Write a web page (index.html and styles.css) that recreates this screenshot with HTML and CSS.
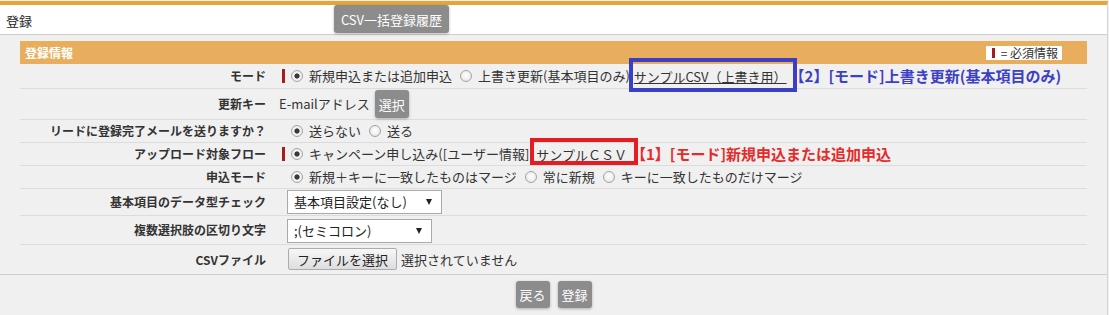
FILE: index.html
```html
<!DOCTYPE html>
<html lang="ja">
<head>
<meta charset="utf-8">
<title>登録</title>
<link rel="stylesheet" href="styles.css">
</head>
<body>
<div class="page">
  <header class="topbar">
    <h1 class="page-title">登録</h1>
    <button class="btn btn-history" type="button">CSV一括登録履歴</button>
  </header>

  <main class="content">
    <section class="panel">
      <div class="panel-head">
        <span class="panel-title">登録情報</span>
        <span class="legend"><span class="legend-bar"></span>= 必須情報</span>
      </div>

      <div class="row row-mode">
        <div class="label">モード</div>
        <div class="value"><span class="req"></span><span class="radio on"></span>新規申込または追加申込<span class="radio next"></span>上書き更新(基本項目のみ)<span class="mark mark-blue"><a class="link">サンプルCSV（上書き用）</a><span class="box box-blue"></span></span><span class="note note-blue">【2】[モード]上書き更新(基本項目のみ)</span></div>
      </div>

      <div class="row">
        <div class="label">更新キー</div>
        <div class="value"><span class="key-text">E-mailアドレス</span><button class="btn btn-select" type="button">選択</button></div>
      </div>

      <div class="row">
        <div class="label">リードに登録完了メールを送りますか？</div>
        <div class="value"><span class="radio on"></span>送らない<span class="radio next"></span>送る</div>
      </div>

      <div class="row">
        <div class="label">アップロード対象フロー</div>
        <div class="value"><span class="req"></span><span class="radio on"></span>キャンペーン申し込み([ユーザー情報]<span class="mark mark-red"><a class="link">サンプルＣＳＶ</a><span class="box box-red"></span></span><span class="note note-red">【1】[モード]新規申込または追加申込</span></div>
      </div>

      <div class="row">
        <div class="label">申込モード</div>
        <div class="value"><span class="radio on"></span>新規＋キーに一致したものはマージ<span class="radio next"></span>常に新規<span class="radio next"></span>キーに一致したものだけマージ</div>
      </div>

      <div class="row">
        <div class="label">基本項目のデータ型チェック</div>
        <div class="value"><span class="select select-type">基本項目設定(なし)</span></div>
      </div>

      <div class="row">
        <div class="label">複数選択肢の区切り文字</div>
        <div class="value"><span class="select select-sep">;(セミコロン)</span></div>
      </div>

      <div class="row row-last">
        <div class="label">CSVファイル</div>
        <div class="value"><button class="file-btn" type="button">ファイルを選択</button><span class="file-none">選択されていません</span></div>
      </div>
    </section>
  </main>

  <footer class="actions">
    <button class="btn btn-small" type="button">戻る</button>
    <button class="btn btn-small" type="button">登録</button>
  </footer>
</div>
</body>
</html>
```

FILE: styles.css
```css
* {
  box-sizing: border-box;
  margin: 0;
  padding: 0;
}

body {
  background: #f0f0f0;
  font-family: "Noto Sans CJK JP", "Noto Sans", sans-serif;
  font-size: 13px;
  color: #333;
  padding-top: 1px;
  width: 1109px;
  height: 315px;
  overflow: hidden;
}

.page {
  width: 1108px;
  border-top: 4px solid #e6a43b;
  border-right: 1px solid #d6d6d6;
  min-height: 314px;
}

/* ---------- top bar ---------- */
.topbar {
  display: flex;
  align-items: flex-start;
  height: 30px;
  background: #fff;
  border-bottom: 1px solid #cdcdcd;
}

.page-title {
  width: 334px;
  padding: 2px 0 0 6px;
  font-size: 13px;
  font-weight: normal;
  line-height: 27px;
  color: #222;
}

.btn {
  border: 0;
  border-radius: 3px;
  background: #8c8c8c;
  color: #fff;
  font-family: inherit;
  font-size: 13px;
  line-height: 1;
  box-shadow: 0 1px 3px rgba(0, 0, 0, 0.28);
  text-align: center;
}

.btn-history {
  width: 115px;
  height: 28px;
}

/* ---------- content ---------- */
.content {
  padding: 6px 20px 0;
}

.panel-head {
  display: flex;
  align-items: center;
  justify-content: space-between;
  height: 23px;
  padding: 0 25px 0 5px;
  background: #e8ae5d;
}

.panel-title {
  color: #fff;
  font-size: 12px;
  font-weight: bold;
  line-height: 23px;
}

.legend {
  display: flex;
  align-items: center;
  height: 14px;
  padding: 0 4px 0 6px;
  background: #fff;
  font-size: 12px;
  line-height: 14px;
  color: #333;
}

.legend-bar {
  width: 3px;
  height: 10px;
  margin-right: 6px;
  background: #9e1f1f;
}

.row {
  display: grid;
  grid-template-columns: 260px 1fr;
  align-items: center;
  min-height: 23px;
  border-bottom: 1px solid #dcdcdc;
}

.row-mode {
  min-height: 25px;
}

.row-last {
  border-bottom: 0;
}

.label {
  padding-right: 14px;
  text-align: right;
  font-size: 12px;
  font-weight: bold;
  line-height: 18px;
  color: #333;
  white-space: nowrap;
}

.value {
  display: flex;
  align-items: center;
  padding-left: 8px;
  line-height: 18px;
  white-space: nowrap;
}

.req {
  display: inline-block;
  width: 3px;
  height: 14px;
  margin-left: -6px;
  margin-right: 3px;
  background: #a31f1f;
}

.radio {
  display: inline-block;
  flex: none;
  width: 12px;
  height: 12px;
  margin: 0 6px 0 3px;
  border: 1px solid #a5a5a5;
  border-radius: 50%;
  background: radial-gradient(circle at 50% 45%, #ffffff 0, #f3f3f3 45%, #d9d9d9 100%);
}

.radio.next {
  margin-left: 8px;
}

.radio.on {
  background: radial-gradient(circle at 50% 50%, #3a3a3a 0, #3a3a3a 2.2px, #f6f6f6 3px, #e2e2e2 100%);
}

.mark {
  position: relative;
  display: inline-block;
  line-height: 17px;
}

.mark-blue {
  margin-left: 4px;
}

.mark-red {
  margin-left: 7px;
}

.link {
  color: #333;
  text-decoration: underline;
}

.box {
  position: absolute;
  border: 4px solid;
}

.box-blue {
  border-color: #3b3fc4;
  left: -5px;
  right: -10px;
  top: -10px;
  bottom: -7px;
}

.box-red {
  border-color: #e31d22;
  left: -6px;
  right: -11px;
  top: -8px;
  bottom: -2px;
}

.note {
  font-size: 15px;
  font-weight: bold;
  line-height: 18px;
}

.note-blue {
  margin-left: 3px;
  color: #3c40c6;
}

.note-red {
  margin-left: 4px;
  color: #e42a2a;
}

.key-text {
  margin-left: -9px;
}

.btn-select {
  width: 34px;
  height: 28px;
  margin: 1px 0 1px 5px;
}

.select {
  display: flex;
  align-items: center;
  justify-content: space-between;
  height: 24px;
  padding: 0 9px 0 6px;
  border: 1px solid #a9a9a9;
  background: #fff;
  color: #222;
  font-size: 13px;
  line-height: 18px;
}

.select::after {
  content: "";
  border-left: 3px solid transparent;
  border-right: 3px solid transparent;
  border-top: 6px solid #222;
}

.select-type {
  width: 155px;
  margin: 1px 0 1px -1px;
}

.select-sep {
  width: 145px;
  margin: 3px 0 1px -1px;
}

.file-btn {
  height: 22px;
  padding: 0 8px;
  margin: 3px 0 4px;
  border: 1px solid #acacac;
  border-radius: 2px;
  background: linear-gradient(#f7f7f7, #dddddd);
  color: #222;
  font-family: inherit;
  font-size: 13px;
  line-height: 1;
}

.file-none {
  margin-left: 4px;
}

/* ---------- footer ---------- */
.actions {
  display: flex;
  justify-content: center;
  gap: 8px;
  padding-top: 6px;
  border-top: 1px solid #cfcfcf;
}

.btn-small {
  width: 34px;
  height: 27px;
}
```
